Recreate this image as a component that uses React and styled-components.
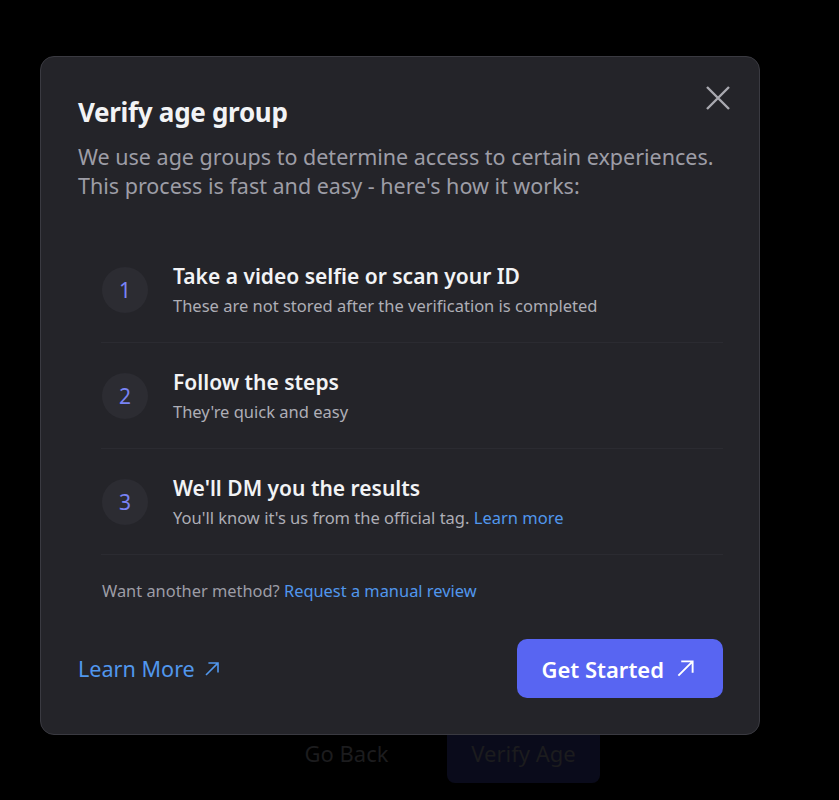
import React from 'react';
import styled, { createGlobalStyle } from 'styled-components';

const colors = {
  page: '#000000',
  modal: '#242429',
  border: '#3a3a41',
  white: '#f2f3f5',
  muted: '#9d9da6',
  subtle: '#aeaeb6',
  link: '#5197ed',
  blurple: '#5865f2',
  badge: '#2c2c32',
  badgeText: '#7983f5',
  divider: '#2b2b31',
};

const steps = [
  {
    title: 'Take a video selfie or scan your ID',
    text: 'These are not stored after the verification is completed',
  },
  { title: 'Follow the steps', text: "They're quick and easy" },
  {
    title: "We'll DM you the results",
    text: "You'll know it's us from the official tag.",
    link: 'Learn more',
  },
];

const ArrowIcon = ({ size = 20 }) => (
  <svg width={size} height={size} viewBox="0 0 20 20" fill="none">
    <path d="M2.5 17.5L17 3M5.5 2.5H17.5V14.5" stroke="currentColor" strokeWidth="2" />
  </svg>
);

const CloseIcon = () => (
  <svg width="26" height="26" viewBox="0 0 26 26" fill="none">
    <path d="M2 2l22 22M24 2L2 24" stroke="currentColor" strokeWidth="2.4" />
  </svg>
);

const App = () => (
  <Page>
    <GlobalStyle />
    <Backdrop>
      <GhostButton>Go Back</GhostButton>
      <GhostButton primary>Verify Age</GhostButton>
    </Backdrop>

    <Modal>
      <CloseButton aria-label="Close">
        <CloseIcon />
      </CloseButton>

      <Title>Verify age group</Title>
      <Intro>
        We use age groups to determine access to certain experiences.
        <br />
        This process is fast and easy - here's how it works:
      </Intro>

      <StepList>
        {steps.map((step, i) => (
          <Step key={step.title}>
            <Badge>{i + 1}</Badge>
            <StepBody>
              <StepTitle>{step.title}</StepTitle>
              <StepText>
                {step.text}
                {step.link && <> <Link>{step.link}</Link></>}
              </StepText>
            </StepBody>
          </Step>
        ))}
      </StepList>

      <AltMethod>
        Want another method? <Link>Request a manual review</Link>
      </AltMethod>

      <Footer>
        <LearnMore>
          Learn More <ArrowIcon size={16} />
        </LearnMore>
        <PrimaryButton>
          Get Started <ArrowIcon size={19} />
        </PrimaryButton>
      </Footer>
    </Modal>
  </Page>
);

const GlobalStyle = createGlobalStyle`
  html, body {
    margin: 0;
    background: ${colors.page};
  }

  body {
    font-family: "Noto Sans", "Open Sans", sans-serif;
  }
`;

const Page = styled.main`
  position: relative;
  width: 839px;
  height: 800px;
  overflow: hidden;
  background: ${colors.page};
`;

const Backdrop = styled.div`
  position: absolute;
  top: 723px;
  left: 272px;
  display: flex;
  gap: 26px;
`;

const GhostButton = styled.div`
  width: ${(p) => (p.primary ? '153px' : '149px')};
  height: 60px;
  border-radius: 8px;
  background: ${(p) => (p.primary ? '#0a0b1b' : 'transparent')};
  color: #1c1c1e;
  font-size: 22px;
  display: flex;
  align-items: center;
  justify-content: center;
`;

const Modal = styled.section`
  position: absolute;
  top: 56px;
  left: 40px;
  width: 720px;
  height: 679px;
  box-sizing: border-box;
  background: ${colors.modal};
  border: 1px solid ${colors.border};
  border-radius: 14px;
  padding: 37px 36px 0 37px;
  display: flex;
  flex-direction: column;
`;

const CloseButton = styled.button`
  position: absolute;
  top: 28px;
  right: 28px;
  padding: 0;
  border: 0;
  background: none;
  color: #a9a9b0;
  display: flex;
`;

const Title = styled.h1`
  margin: 0;
  font-size: 26px;
  line-height: 36px;
  font-weight: 700;
  color: ${colors.white};
  letter-spacing: -0.3px;
`;

const Intro = styled.p`
  margin: 12px 0 0;
  font-size: 21.5px;
  line-height: 29px;
  color: ${colors.muted};
`;

const StepList = styled.ol`
  list-style: none;
  margin: 37px 0 0;
  padding: 0 0 0 23px;
`;

const Step = styled.li`
  display: flex;
  align-items: center;
  gap: 25px;
  height: 105px;
  padding-left: 1px;
  border-bottom: 1px solid ${colors.divider};
`;

const Badge = styled.span`
  width: 46px;
  height: 46px;
  flex: none;
  border-radius: 50%;
  background: ${colors.badge};
  color: ${colors.badgeText};
  font-size: 21px;
  display: flex;
  align-items: center;
  justify-content: center;
`;

const StepBody = styled.div`
  display: flex;
  flex-direction: column;
  gap: 5px;
`;

const StepTitle = styled.h2`
  margin: 0;
  font-size: 21px;
  line-height: 27px;
  font-weight: 600;
  color: ${colors.white};
`;

const StepText = styled.p`
  margin: 0;
  font-size: 16.5px;
  line-height: 22px;
  color: ${colors.subtle};
`;

const Link = styled.a`
  color: ${colors.link};
  cursor: pointer;
`;

const AltMethod = styled.p`
  margin: 25px 0 0 24px;
  font-size: 16.4px;
  line-height: 22px;
  color: ${colors.muted};
`;

const Footer = styled.div`
  margin-top: 37px;
  display: flex;
  align-items: center;
  justify-content: space-between;
`;

const LearnMore = styled.a`
  display: flex;
  align-items: center;
  gap: 9px;
  font-size: 21.6px;
  color: ${colors.link};
`;

const PrimaryButton = styled.button`
  height: 59px;
  padding: 0 28px 0 24px;
  border: 0;
  border-radius: 10px;
  background: ${colors.blurple};
  color: #ffffff;
  font-family: inherit;
  font-size: 22px;
  font-weight: 600;
  display: flex;
  align-items: center;
  gap: 12px;
`;

export default App;
